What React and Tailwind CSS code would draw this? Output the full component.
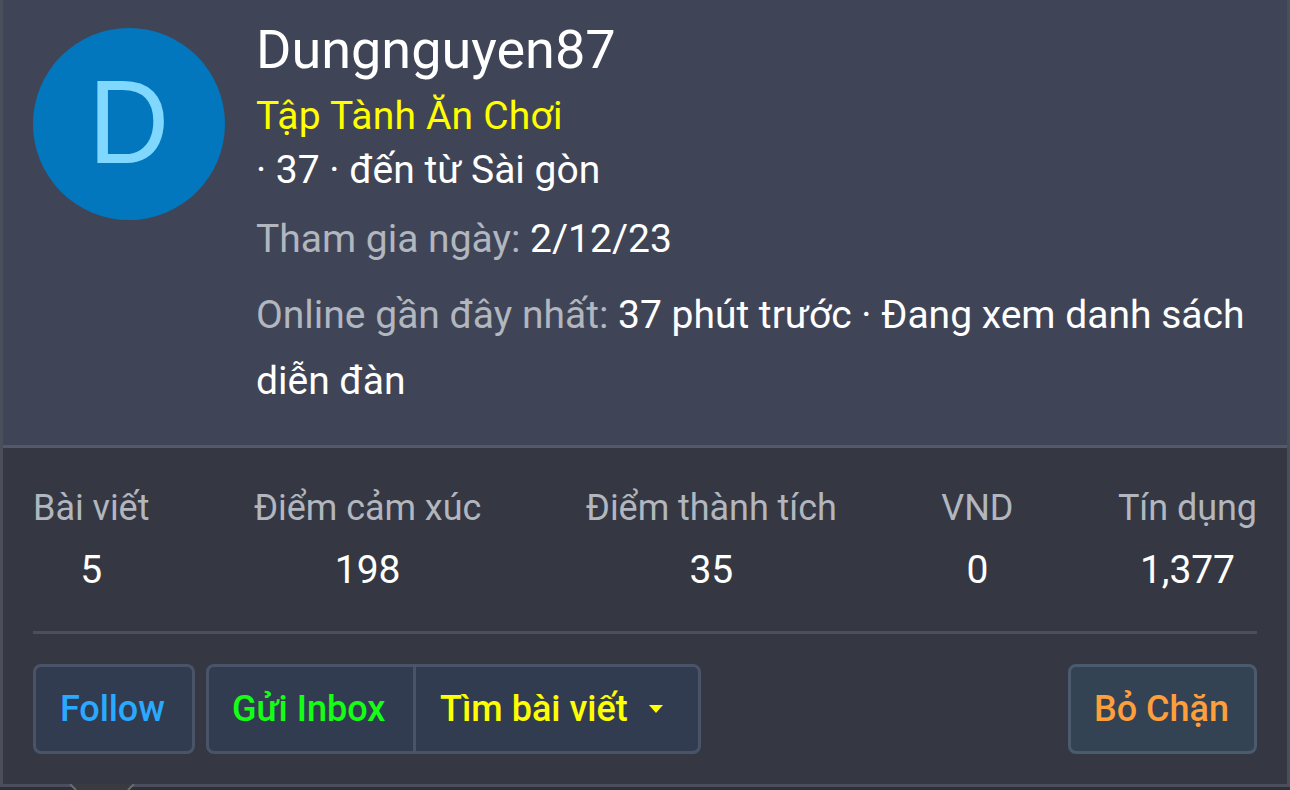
import clsx from 'clsx';

const stats = [
  { label: 'Bài viết', value: '5' },
  { label: 'Điểm cảm xúc', value: '198' },
  { label: 'Điểm thành tích', value: '35' },
  { label: 'VND', value: '0' },
  { label: 'Tín dụng', value: '1,377' },
];

function Button({ className, children }) {
  return (
    <button
      className={clsx(
        'flex h-[90px] items-center border-[3px] text-[36px] leading-none font-medium whitespace-nowrap',
        className
      )}
    >
      {children}
    </button>
  );
}

function InfoLine({ label, className, children }) {
  return (
    <p className={clsx('text-[39px] leading-[66px] text-white', className)}>
      <span className="text-[#b1b6bf]">{label}</span> {children}
    </p>
  );
}

export default function App() {
  return (
    <div className="flex h-[790px] w-[1290px] flex-col overflow-hidden bg-[#2b303d] font-['Roboto',sans-serif]">
      <div className="flex h-[787px] shrink-0 flex-col border-x-[3px] border-b-[3px] border-[#4b4f5b] bg-[#353842]">
        {/* Member header */}
        <div className="flex h-[448px] shrink-0 gap-[31px] border-b-[3px] border-[#525a69] bg-[#3f4557] pl-[30px]">
          <div className="mt-7 flex size-48 shrink-0 items-center justify-center rounded-full bg-[#0277bd]">
            <span className="mr-px mb-[5px] scale-x-95 font-['Liberation_Sans',sans-serif] text-[118px] leading-none text-[#80d8ff]">D</span>
          </div>
          <div className="flex-1 pt-[18px] whitespace-nowrap">
            <h1 className="text-[54px] leading-[64px] text-white">Dungnguyen87</h1>
            <p className="mt-[7px] text-[39px] leading-[54px] tracking-[0.2px] text-[#ffff00]">Tập Tành Ăn Chơi</p>
            <p className="text-[39px] leading-[54px] text-white">· 37 · đến từ Sài gòn</p>
            <InfoLine label="Tham gia ngày:" className="mt-[9px]">2/12/23</InfoLine>
            <InfoLine label="Online gần đây nhất:" className="mt-[10px]">
              37 phút trước · Đang xem danh sách
              <br />
              diễn đàn
            </InfoLine>
          </div>
        </div>

        {/* Stats */}
        <div className="mx-[30px] flex justify-between border-b-[3px] border-[#4b4f5b] pt-[29px] pb-[29px] text-center">
          {stats.map((stat) => (
            <dl key={stat.label}>
              <dt className="text-[36px] leading-[62px] tracking-[-0.05px] text-[#b1b6bf]">{stat.label}</dt>
              <dd className="text-[39px] leading-[63px] tracking-[-0.1px] text-white">{stat.value}</dd>
            </dl>
          ))}
        </div>

        {/* Actions */}
        <div className="mx-[30px] mt-[30px] flex">
          <Button className="w-[162px] rounded-lg border-[#4a5469] bg-[#323c50] pl-[24px] tracking-[-0.1px] text-[#29a9ff]">
            Follow
          </Button>
          <div className="ml-[11px] flex">
            <Button className="w-[210px] rounded-l-lg border-[#4a5469] bg-[#323c50] pl-[23px] text-[#14ff14]">
              Gửi Inbox
            </Button>
            <Button className="-ml-[3px] w-[288px] gap-[21px] rounded-r-lg border-[#4a5469] bg-[#323c50] pl-[24px] text-[#ffff00]">
              Tìm bài viết
              <svg className="h-2 w-[14px]" viewBox="0 0 14 8" fill="currentColor">
                <path d="M0 0h14L7 8z" />
              </svg>
            </Button>
          </div>
          <Button className="ml-auto w-[189px] rounded-lg border-[#4b5a6c] bg-[#344354] pl-[23px] text-[#ff9f3c]">
            Bỏ Chặn
          </Button>
        </div>
      </div>

      {/* Tooltip arrow, cut off by the viewport */}
      <svg className="relative -mt-[3px] ml-[69px] h-[6px] w-[66px] shrink-0" viewBox="0 0 66 6">
        <path d="M0 0h66l-6 6H6z" fill="#3a3b41" />
        <path d="M1 0l6 6M65 0l-6 6" stroke="#696c72" strokeWidth="2" fill="none" />
      </svg>
    </div>
  );
}
